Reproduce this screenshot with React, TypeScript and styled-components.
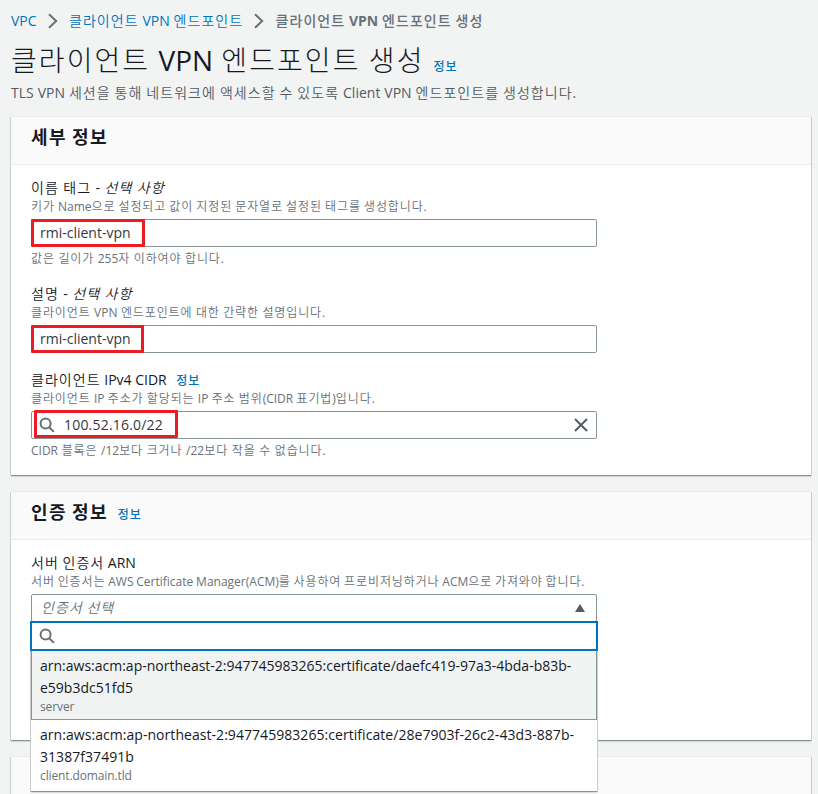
import React, { Fragment } from 'react';
import styled, { createGlobalStyle, css } from 'styled-components';

const GlobalStyle = createGlobalStyle`
  * { box-sizing: border-box; }
  html, body { margin: 0; height: 100%; }
  body {
    background: #f2f3f3;
    color: #16191f;
    font-family: "Open Sans", "Noto Sans", "Noto Sans CJK KR", sans-serif;
    font-size: 14px;
    line-height: 22px;
    overflow: hidden;
  }
`;

const Hangul = styled.span`
  font-family: "Noto Sans CJK KR", sans-serif;
  font-weight: var(--hangul-weight, 350);
  letter-spacing: 0.074em;
  line-height: 1;
`;

/* Sets Hangul runs in the Korean face and leaves Latin runs in the body face. */
function Text({ children }: { children: string }) {
  const runs = children.split(/([\uac00-\ud7a3]+)/);
  return (
    <>
      {runs.map((run, i) =>
        i % 2 ? <Hangul key={i}>{run}</Hangul> : <Fragment key={i}>{run}</Fragment>,
      )}
    </>
  );
}

const Page = styled.main`
  height: 794px;
  padding: 10px 7px 0 11px;
  display: flex;
  flex-direction: column;
  overflow: hidden;
`;

const Breadcrumbs = styled.nav`
  display: flex;
  align-items: center;
  height: 22px;
  white-space: nowrap;
`;

const Crumb = styled.span<{ $current?: boolean }>`
  color: #0073bb;
  word-spacing: 0.2px;
  ${(p) =>
    p.$current &&
    css`
      color: #687078;
      font-weight: 700;
      --hangul-weight: 500;
    `}
`;

const CrumbArrow = styled.svg`
  width: 10px;
  height: 16px;
  margin: 0 11.4px 0 11px;
  fill: none;
  stroke: #687078;
  stroke-width: 2;
`;

const TitleRow = styled.div`
  display: flex;
  align-items: baseline;
  height: 36px;
  margin-top: 10px;
  white-space: nowrap;
`;

const Title = styled.h1`
  margin: 0;
  font-size: 28px;
  font-weight: 400;
  line-height: 36px;
  word-spacing: 1px;
  --hangul-weight: 300;
`;

const InfoLink = styled.a<{ $gap?: number }>`
  margin-left: ${(p) => p.$gap ?? 10}px;
  color: #0073bb;
  font-size: 12px;
  font-weight: 700;
  line-height: 16px;
  --hangul-weight: 500;
`;

const Lead = styled.p`
  margin: 4px 0 0;
  height: 22px;
  color: #545b64;
  white-space: nowrap;
  word-spacing: 0.3px;
`;

const Panels = styled.div`
  display: flex;
  flex-direction: column;
  gap: 16px;
  margin-top: 12px;
`;

const Panel = styled.section<{ $height: number }>`
  height: ${(p) => p.$height}px;
  background: #fff;
  border-top: 1px solid #e6eaea;
  box-shadow:
    0 1px 0 0 #879596,
    0 2px 1px 0 rgba(0, 28, 36, 0.12),
    1px 1px 0 0 #ccd2d2,
    -1px 1px 0 0 #ccd2d2;
`;

const PanelHeader = styled.header`
  display: flex;
  align-items: baseline;
  height: 48px;
  padding: 9px 20px 0;
  background: #fafafa;
  border-bottom: 1px solid #eaeded;
`;

const PanelTitle = styled.h2`
  margin: 0;
  font-size: 18px;
  font-weight: 700;
  line-height: 22px;
  word-spacing: 0.5px;
  --hangul-weight: 700;
`;

const PanelBody = styled.div`
  display: flex;
  flex-direction: column;
  gap: 16px;
  padding: 12px 20px 0;
`;

const Field = styled.div`
  width: 566px;
`;

const Label = styled.div<{ $gap?: number }>`
  height: 22px;
  white-space: nowrap;
  word-spacing: ${(p) => p.$gap ?? 0}px;
`;

const Hint = styled.div<{ $below?: boolean; $gap?: number }>`
  height: 16px;
  margin: ${(p) => (p.$below ? '4px 0 0' : '0 0 4px')};
  color: #687078;
  font-size: 12px;
  line-height: 16px;
  white-space: nowrap;
  word-spacing: ${(p) => p.$gap ?? 0}px;
`;

const Control = styled.div`
  position: relative;
  display: flex;
  align-items: center;
  height: 28px;
  padding: 0 8px;
  border: 1px solid #879596;
  border-radius: 2px;
  background: #fff;
`;

const Value = styled.span<{ $track?: number }>`
  flex: 1;
  color: #33383f;
  letter-spacing: ${(p) => p.$track ?? 0}px;
`;

const Placeholder = styled.em`
  flex: 1;
  padding-left: 1px;
  color: #687078;
`;

const Highlight = styled.span<{ $x: number; $y: number; $w: number }>`
  position: absolute;
  left: ${(p) => p.$x}px;
  top: ${(p) => p.$y}px;
  width: ${(p) => p.$w}px;
  height: 28px;
  border: 3px solid #ed1c24;
  border-radius: 1px;
`;

const SearchSvg = styled.svg`
  flex: none;
  width: 16px;
  height: 16px;
  margin: 0 9px 0 -1px;
  fill: none;
  stroke: #687078;
  stroke-width: 2;
`;

const ClearSvg = styled.svg`
  width: 14px;
  height: 14px;
  fill: none;
  stroke: #545b64;
  stroke-width: 2;
`;

const CaretSvg = styled.svg`
  width: 10px;
  height: 8px;
  margin-right: 3px;
  margin-top: -1px;
  fill: #545b64;
`;

const SelectWrap = styled.div`
  position: relative;
`;

const Dropdown = styled.div`
  position: absolute;
  z-index: 1;
  top: 27px;
  left: 0;
  width: 566px;
  height: 170px;
  background: #fff;
  box-shadow:
    0 1px 0 0 #879596,
    0 2px 1px 0 rgba(0, 28, 36, 0.12),
    1px 1px 0 0 #ccd2d2,
    -1px 1px 0 0 #ccd2d2;
`;

const Filter = styled.div`
  display: flex;
  align-items: center;
  height: 30px;
  margin: 0 -1px;
  padding: 0 8px;
  border: 2px solid #0073bb;
  background: #fff;
`;

const Option = styled.div<{ $active?: boolean }>`
  height: 69px;
  padding: 4px 8px;
  border: 1px solid transparent;
  border-top: 0;
  ${(p) =>
    p.$active &&
    css`
      background: #f1f3f3;
      border-color: #879596;
    `}
`;

const OptionLine = styled.div<{ $track: number }>`
  white-space: nowrap;
  letter-spacing: ${(p) => p.$track}px;
`;

const OptionNote = styled.div`
  color: #687078;
  font-size: 12px;
  line-height: 16px;
  letter-spacing: -0.12px;
`;

const SearchIcon = () => (
  <SearchSvg viewBox="0 0 16 16">
    <circle cx="6.6" cy="6.6" r="5" />
    <path d="M10.2 10.2l4.7 4.7" />
  </SearchSvg>
);

const Arrow = () => (
  <CrumbArrow viewBox="0 0 10 16">
    <path d="M1 1.2l7.2 6.8L1 14.8" />
  </CrumbArrow>
);

const Info = ({ gap }: { gap?: number }) => (
  <InfoLink $gap={gap}>
    <Text>정보</Text>
  </InfoLink>
);

const options = [
  {
    lines: ['arn:aws:acm:ap-northeast-2:947745983265:certificate/daefc419-97a3-4bda-b83b-', 'e59b3dc51fd5'],
    note: 'server',
    track: 0,
  },
  {
    lines: ['arn:aws:acm:ap-northeast-2:947745983265:certificate/28e7903f-26c2-43d3-887b-', '31387f37491b'],
    note: 'client.domain.tld',
    track: 0.05,
  },
];

export default function App() {
  return (
    <>
      <GlobalStyle />
      <Page>
        <Breadcrumbs>
          <Crumb>VPC</Crumb>
          <Arrow />
          <Crumb>
            <Text>클라이언트 VPN 엔드포인트</Text>
          </Crumb>
          <Arrow />
          <Crumb $current>
            <Text>클라이언트 VPN 엔드포인트 생성</Text>
          </Crumb>
        </Breadcrumbs>
        <TitleRow>
          <Title>
            <Text>클라이언트 VPN 엔드포인트 생성</Text>
          </Title>
          <Info gap={9} />
        </TitleRow>
        <Lead>
          <Text>TLS VPN 세션을 통해 네트워크에 액세스할 수 있도록 Client VPN 엔드포인트를 생성합니다.</Text>
        </Lead>

        <Panels>
          <Panel $height={359}>
            <PanelHeader>
              <PanelTitle>
                <Text>세부 정보</Text>
              </PanelTitle>
            </PanelHeader>
            <PanelBody>
              <Field>
                <Label $gap={0.8}>
                  <Text>이름 태그 - </Text>
                  <em>
                    <Text>선택 사항</Text>
                  </em>
                </Label>
                <Hint>
                  <Text>키가 Name으로 설정되고 값이 지정된 문자열로 설정된 태그를 생성합니다.</Text>
                </Hint>
                <Control>
                  <Value>rmi-client-vpn</Value>
                  <Highlight $x={-1} $y={-1} $w={114} />
                </Control>
                <Hint $below $gap={0.4}>
                  <Text>값은 길이가 255자 이하여야 합니다.</Text>
                </Hint>
              </Field>
              <Field>
                <Label $gap={0.8}>
                  <Text>설명 - </Text>
                  <em>
                    <Text>선택 사항</Text>
                  </em>
                </Label>
                <Hint $gap={0.3}>
                  <Text>클라이언트 VPN 엔드포인트에 대한 간략한 설명입니다.</Text>
                </Hint>
                <Control>
                  <Value>rmi-client-vpn</Value>
                  <Highlight $x={-1} $y={-1} $w={113} />
                </Control>
              </Field>
              <Field>
                <Label>
                  <Text>클라이언트 IPv4 CIDR</Text>
                  <Info gap={9.5} />
                </Label>
                <Hint $gap={0.15}>
                  <Text>클라이언트 IP 주소가 할당되는 IP 주소 범위(CIDR 표기법)입니다.</Text>
                </Hint>
                <Control>
                  <SearchIcon />
                  <Value $track={0.2}>100.52.16.0/22</Value>
                  <ClearSvg viewBox="0 0 14 14">
                    <path d="M1 1l12 12M13 1L1 13" />
                  </ClearSvg>
                  <Highlight $x={2} $y={-2} $w={144} />
                </Control>
                <Hint $below $gap={0.5}>
                  <Text>CIDR 블록은 /12보다 크거나 /22보다 작을 수 없습니다.</Text>
                </Hint>
              </Field>
            </PanelBody>
          </Panel>

          <Panel $height={249}>
            <PanelHeader>
              <PanelTitle>
                <Text>인증 정보</Text>
              </PanelTitle>
              <Info />
            </PanelHeader>
            <PanelBody>
              <Field>
                <Label>
                  <Text>서버 인증서 ARN</Text>
                </Label>
                <Hint $gap={-0.3}>
                  <Text>
                    서버 인증서는 AWS Certificate Manager(ACM)를 사용하여 프로비저닝하거나 ACM으로 가져와야 합니다.
                  </Text>
                </Hint>
                <SelectWrap>
                  <Control>
                    <Placeholder>
                      <Text>인증서 선택</Text>
                    </Placeholder>
                    <CaretSvg viewBox="0 0 10 8">
                      <path d="M5 0l5 8H0z" />
                    </CaretSvg>
                  </Control>
                  <Dropdown>
                    <Filter>
                      <SearchIcon />
                    </Filter>
                    {options.map((o, i) => (
                      <Option key={o.note} $active={i === 0}>
                        {o.lines.map((line) => (
                          <OptionLine key={line} $track={o.track}>
                            {line}
                          </OptionLine>
                        ))}
                        <OptionNote>{o.note}</OptionNote>
                      </Option>
                    ))}
                  </Dropdown>
                </SelectWrap>
              </Field>
            </PanelBody>
          </Panel>

          <Panel $height={60}>
            <PanelHeader />
          </Panel>
        </Panels>
      </Page>
    </>
  );
}
